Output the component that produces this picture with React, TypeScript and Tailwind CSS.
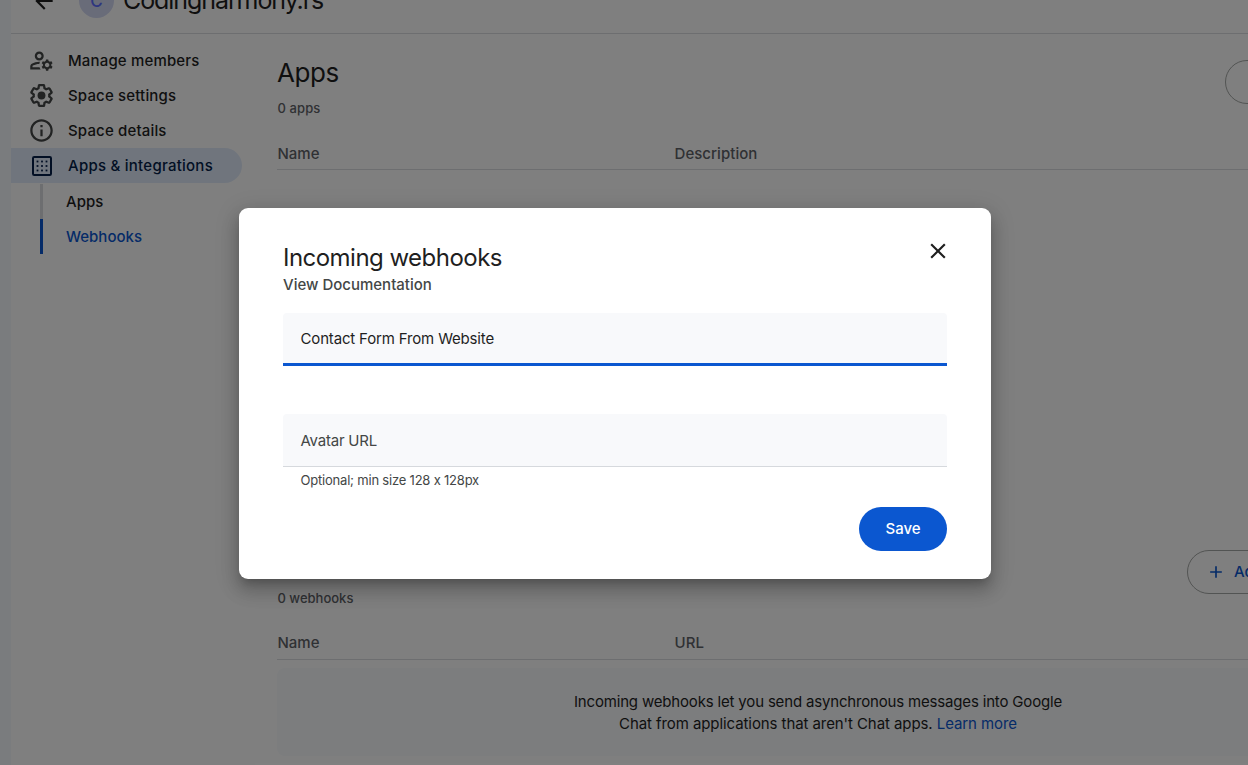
import type { ReactNode } from "react";
import { MdAdd, MdArrowBack, MdClose, MdInfoOutline, MdOutlineManageAccounts } from "react-icons/md";

function SettingsIcon() {
  return (
    <svg viewBox="0 0 24 24" className="h-[27px] w-[27px]" fill="currentColor">
      <path d="M13.85 22.25h-3.7c-.74 0-1.36-.54-1.45-1.27l-.27-1.89c-.27-.14-.53-.29-.79-.46l-1.8.72c-.7.26-1.47-.03-1.81-.65L2.2 15.53c-.35-.66-.2-1.44.36-1.88l1.53-1.19c-.01-.15-.02-.3-.02-.46 0-.15.01-.31.02-.46l-1.52-1.19c-.59-.45-.74-1.26-.37-1.88l1.85-3.19c.34-.62 1.11-.9 1.79-.63l1.81.73c.26-.17.52-.32.78-.46l.27-1.91c.09-.7.71-1.25 1.44-1.25h3.7c.74 0 1.36.54 1.45 1.27l.27 1.89c.27.14.53.29.79.46l1.8-.72c.71-.26 1.48.03 1.82.65l1.84 3.18c.36.66.2 1.44-.36 1.88l-1.52 1.19c.01.15.02.3.02.46s-.01.31-.02.46l1.52 1.19c.56.45.72 1.23.37 1.86l-1.86 3.22c-.34.62-1.11.9-1.8.63l-1.8-.72c-.26.17-.52.32-.78.46l-.27 1.91c-.1.68-.72 1.22-1.46 1.22zm-3.23-2h2.76l.37-2.55.53-.22c.44-.18.88-.44 1.34-.78l.45-.34 2.38.96 1.38-2.4-2.03-1.58.07-.56c.03-.26.06-.51.06-.78s-.03-.53-.06-.78l-.07-.56 2.03-1.58-1.39-2.4-2.39.96-.45-.35c-.42-.32-.87-.58-1.33-.77l-.52-.22-.37-2.55h-2.76l-.37 2.55-.53.21c-.44.19-.88.44-1.34.79l-.45.33-2.38-.95-1.39 2.39 2.03 1.58-.07.56a7 7 0 0 0-.06.79c0 .26.02.53.06.78l.07.56-2.03 1.58 1.38 2.4 2.39-.96.45.35c.43.33.86.58 1.33.77l.53.22.38 2.55z" />
      <circle cx="12" cy="12" r="3.5" />
    </svg>
  );
}

function GridIcon() {
  return (
    <svg viewBox="0 0 20 20" className="h-5 w-5" fill="currentColor">
      <rect x="1" y="1" width="18" height="18" rx="1.2" fill="none" stroke="currentColor" strokeWidth="2" />
      {[5.5, 10, 14.5].map((y) =>
        [5.5, 10, 14.5].map((x) => <rect key={`${x}-${y}`} x={x - 0.9} y={y - 0.9} width="1.8" height="1.8" />),
      )}
    </svg>
  );
}

function NavItem({ icon, active, children }: { icon: ReactNode; active?: boolean; children: ReactNode }) {
  return (
    <a
      className={
        active
          ? "flex h-[35px] items-center rounded-r-full bg-[#e1ebfb] text-[#041e49]"
          : "flex h-[35px] items-center text-[#1f1f1f]"
      }
    >
      <span
        className={
          active
            ? "ml-[17px] flex w-7 justify-center"
            : "mb-px ml-[16px] flex w-7 justify-center pl-px text-[#444746]"
        }
      >
        {icon}
      </span>
      <span
        className={
          active
            ? "ml-3 pt-[2px] text-[15px] font-medium tracking-[0.25px]"
            : "ml-[13px] pt-[2px] text-[15px] font-medium tracking-[0.16px]"
        }
      >
        {children}
      </span>
    </a>
  );
}

function TableHead({ second, raised }: { second: string; raised?: boolean }) {
  return (
    <div
      className={
        raised
          ? "flex h-8 border-b border-[#dadce0] text-[15px] leading-[30px] font-medium text-[#5f6368]"
          : "flex h-8 border-b border-[#dadce0] text-[15px] leading-8 font-medium text-[#5f6368]"
      }
    >
      <span className="w-[397px] pl-[0.5px]">Name</span>
      <span className="pl-[0.5px] tracking-[0.05px]">{second}</span>
    </div>
  );
}

function Sidebar() {
  return (
    <nav className="w-[231px] shrink-0 pt-[9px]">
      <NavItem icon={<MdOutlineManageAccounts className="h-[27px] w-[27px]" />}>Manage members</NavItem>
      <NavItem icon={<SettingsIcon />}>Space settings</NavItem>
      <NavItem icon={<MdInfoOutline className="h-[27px] w-[27px]" />}>Space details</NavItem>
      <NavItem active icon={<GridIcon />}>
        Apps &amp; integrations
      </NavItem>
      <div className="mt-px ml-[29px] text-[15px] leading-[35px] font-medium">
        <a className="block h-[35px] border-l-3 border-[#dadce0] pl-[23px] text-[#1f1f1f]">Apps</a>
        <a className="block h-[35px] border-l-3 border-[#0b57d0] pl-[23px] text-[#0b57d0]">Webhooks</a>
      </div>
    </nav>
  );
}

function Content() {
  return (
    <main className="ml-[35px] w-[1082px] shrink-0">
      <section className="h-[516px]">
        <div className="flex h-[104px] justify-between">
          <div className="pt-[21px]">
            <h1 className="text-[26px] leading-9 tracking-[-0.4px] text-[#1f1f1f]">Apps</h1>
            <p className="mt-[7px] pl-[0.5px] text-[13px] leading-5 font-medium tracking-[0.1px] text-[#5f6368]">
              0 apps
            </p>
          </div>
          <div className="mt-[26px] h-11 w-[134px] rounded-full border border-[#a5a8a6]" />
        </div>
        <TableHead second="Description" />
      </section>
      <section>
        <div className="flex h-[78px] justify-between">
          <p className="pt-[38px] pl-[0.5px] text-[13px] leading-5 font-medium text-[#5f6368]">0 webhooks</p>
          <a className="flex h-11 w-[172px] items-center rounded-full border border-[#a5a8a6] pl-[18px] text-[15px] font-medium text-[#0b57d0]">
            <MdAdd className="h-5 w-5" />
            <span className="ml-[8px]">Add webhook</span>
          </a>
        </div>
        <TableHead second="URL" raised />
        <div className="mt-2 flex h-[88px] flex-col items-center rounded-lg bg-[#f8fafd] pt-[23px] text-[15px] leading-[22px] text-[#1f1f1f]">
          <p className="tracking-[-0.173px]">Incoming webhooks let you send asynchronous messages into Google</p>
          <p className="tracking-[-0.08px]">
            Chat from applications that aren't Chat apps. <a className="text-[#0b57d0]">Learn more</a>
          </p>
        </div>
      </section>
    </main>
  );
}

function WebhookDialog() {
  return (
    <div
      role="dialog"
      className="absolute top-[208px] left-[239px] flex h-[371px] w-[752px] flex-col rounded-[9px] bg-white px-11 shadow-[0_12px_17px_2px_rgba(0,0,0,0.14),0_5px_22px_4px_rgba(0,0,0,0.12),0_7px_8px_-4px_rgba(0,0,0,0.2)]"
    >
      <div className="flex h-[66px] justify-between pt-[34px]">
        <h2 className="text-[24px] leading-8 tracking-[-0.53px] text-[#1f1f1f]">Incoming webhooks</h2>
        <MdClose className="-mt-[4px] -mr-[4px] h-[26px] w-[26px] text-[#1f1f1f]" />
      </div>
      <a className="mt-px text-[15px] leading-5 font-medium text-[#444746]">View Documentation</a>
      <div className="mt-[18px] flex h-[53px] items-center rounded-t border-b-3 border-[#0b57d0] bg-[#f8f9fb] pt-[2px] pl-[17.5px] text-[15px] tracking-[-0.163px] text-[#1f1f1f]">
        Contact Form From Website
      </div>
      <div className="mt-12 flex h-[53px] items-center rounded-t border-b border-[#d6d9dd] bg-[#f8f9fb] pt-[2px] pl-[17.5px] text-[15px] tracking-[-0.22px] text-[#444746]">
        Avatar URL
      </div>
      <p className="mt-[3px] pl-[17.5px] text-[13px] leading-5 tracking-[-0.203px] text-[#444746]">
        Optional; min size 128 x 128px
      </p>
      <button className="mt-[17px] h-11 w-[88px] self-end rounded-full bg-[#0b57d0] text-[15px] font-medium text-white">
        Save
      </button>
    </div>
  );
}

export default function App() {
  return (
    <div className="relative flex h-[765px] w-[1248px] overflow-hidden bg-white font-['Inter',sans-serif]">
      <div className="w-[11px] shrink-0 bg-[#f5f8fc]" />
      <div className="w-[1237px] shrink-0 overflow-hidden">
        <header className="h-[34px] overflow-hidden border-b border-[#dadce0]">
          <div className="-mt-[35px] flex h-[71px] items-center text-[#1f1f1f]">
            <MdArrowBack className="ml-5 h-[26px] w-[26px]" />
            <span className="ml-[22px] flex h-[35px] w-[35px] items-center justify-center rounded-full bg-[#d2d8f3] pt-[2px] text-[17px] font-medium text-[#5c6cff]">
              C
            </span>
            <span className="ml-[9px] text-[25px] tracking-[-1.08px]">Codingharmony.rs</span>
          </div>
        </header>
        <div className="flex">
          <Sidebar />
          <Content />
        </div>
      </div>
      <div className="absolute inset-0 bg-black/50" />
      <WebhookDialog />
    </div>
  );
}
